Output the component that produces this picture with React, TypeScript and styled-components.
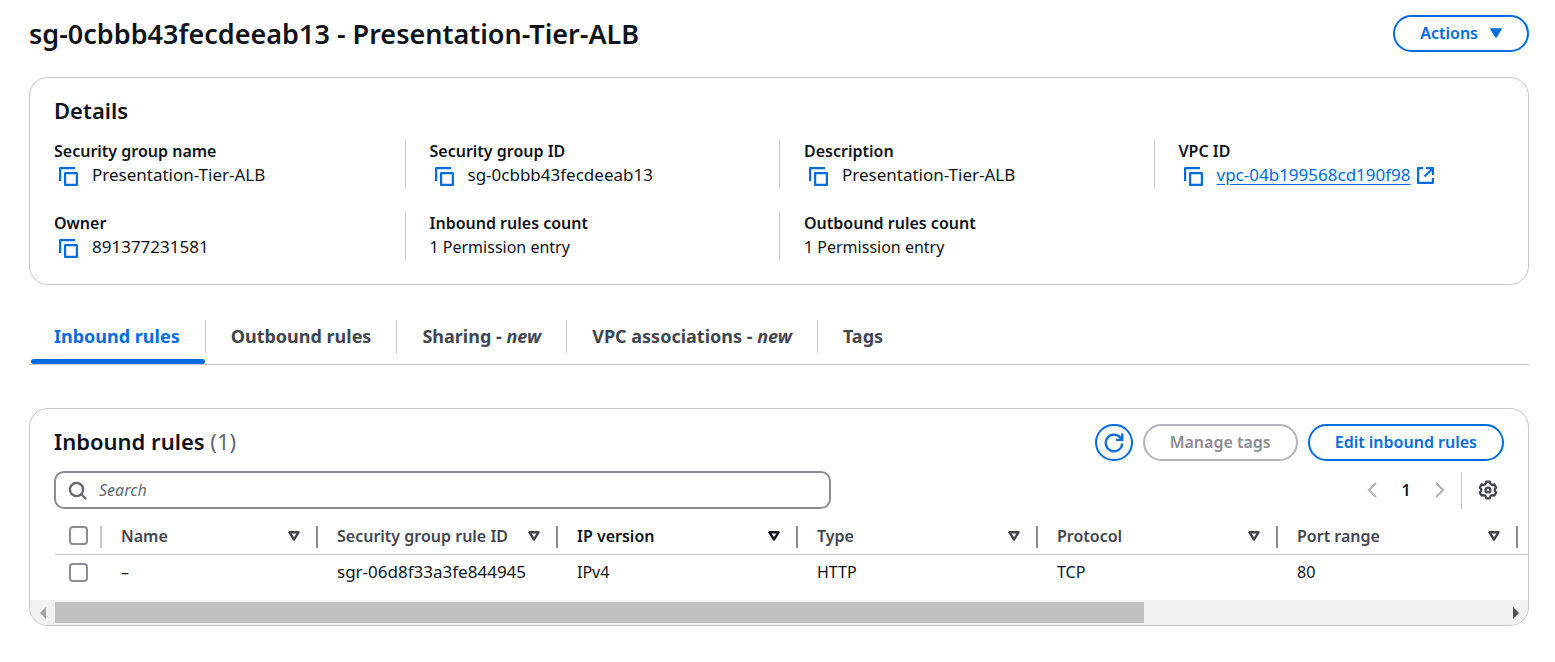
import React from "react";
import styled, { createGlobalStyle, css } from "styled-components";

const color = {
  text: "#0f141a",
  heading: "#424650",
  muted: "#656871",
  link: "#006ce0",
  line: "#c6c6cd",
  control: "#8c8c94",
  disabled: "#b4b4bb",
};

const GlobalStyle = createGlobalStyle`
  * { box-sizing: border-box; }
  body {
    margin: 0;
    background: #fff;
    color: ${color.text};
    font-family: "Noto Sans", "Open Sans", sans-serif;
    font-size: 16px;
    line-height: 24px;
  }
  button, input { font: inherit; }
`;

const Page = styled.main`
  padding: 15px 26px 36px 29px;
`;

const PageHeader = styled.header`
  display: flex;
  align-items: center;
  justify-content: space-between;
  margin-bottom: 25px;
`;

const PageTitle = styled.h1`
  margin: 0;
  font-size: 27px;
  line-height: 37px;
  font-weight: 600;
`;

const Card = styled.section`
  border: 1px solid ${color.line};
  border-radius: 19px;
  overflow: hidden;
`;

const CardTitle = styled.h2`
  margin: 0;
  font-size: 22px;
  line-height: 28px;
  font-weight: 600;
`;

const Counter = styled.span`
  color: ${color.muted};
  font-weight: 400;
`;

const DetailsHeader = styled.div`
  padding: 18px 24px 16px;
`;

const DetailsGrid = styled.dl`
  display: grid;
  grid-template-columns: repeat(4, 1fr);
  row-gap: 24px;
  margin: 0;
  padding-bottom: 24px;
`;

const DetailCell = styled.div`
  padding: 0 24px;
  border-left: 1px solid ${color.line};
  &:nth-child(4n + 1) { border-left: 0; }
`;

const DetailLabel = styled.dt`
  line-height: 22px;
  font-weight: 600;
`;

const DetailValue = styled.dd`
  display: flex;
  align-items: center;
  height: 26px;
  margin: 0;
`;

const CopyButton = styled.button`
  display: flex;
  margin: 3px 14px 0 5px;
  padding: 0;
  border: 0;
  background: none;
  color: ${color.link};
`;

const Identifier = styled.span`
  font-size: 17px;
`;

const ExternalLink = styled.a`
  display: flex;
  align-items: center;
  gap: 6px;
  color: ${color.link};
  text-underline-offset: 3px;
`;

const PillButton = styled.button`
  display: inline-flex;
  align-items: center;
  justify-content: center;
  gap: 12px;
  height: 37px;
  padding: 0 25px 2px;
  border: 2px solid ${color.link};
  border-radius: 19px;
  background: #fff;
  color: ${color.link};
  font-weight: 600;
  &:disabled {
    border-color: ${color.disabled};
    color: ${color.control};
  }
`;

const RoundButton = styled(PillButton)`
  width: 38px;
  padding: 0;
`;

const TabList = styled.div`
  display: flex;
  margin: 24px 0 43px;
  border-bottom: 1px solid ${color.line};
`;

const Tab = styled.button<{ $active?: boolean }>`
  display: flex;
  flex-direction: column;
  padding: 11px 0 0;
  border: 0;
  background: none;
  color: ${(p) => (p.$active ? color.link : color.heading)};
  font-size: 18px;
  font-weight: 700;
  &::after {
    content: "";
    align-self: stretch;
    height: 5px;
    margin: 6px 1px 0 2px;
    border-radius: 3px;
    background: ${(p) => (p.$active ? color.link : "transparent")};
  }
  &:not(:last-child) > span { border-right: 1px solid ${color.line}; }
`;

const TabLabel = styled.span`
  padding: 4px 25px 5px;
  white-space: nowrap;
`;

const TableHeader = styled.div`
  display: flex;
  align-items: center;
  justify-content: space-between;
  padding: 15px 24px 0;
  ${CardTitle} { padding-bottom: 4px; }
`;

const ButtonRow = styled.div`
  display: flex;
  gap: 10px;
`;

const Toolbar = styled.div`
  display: flex;
  align-items: center;
  justify-content: space-between;
  padding: 10px 24px;
`;

const SearchBox = styled.label`
  display: flex;
  align-items: center;
  gap: 12px;
  flex: 0 1 777px;
  height: 38px;
  padding: 0 12px;
  border: 2px solid ${color.control};
  border-radius: 10px;
  color: ${color.muted};
`;

const SearchInput = styled.input`
  flex: 1;
  min-width: 0;
  padding: 0;
  border: 0;
  outline: 0;
  background: none;
  color: ${color.text};
  &::placeholder {
    color: ${color.muted};
    font-style: italic;
    opacity: 1;
  }
`;

const Pagination = styled.nav`
  display: flex;
  align-items: center;
`;

const IconButton = styled.button`
  display: flex;
  padding: 0;
  border: 0;
  background: none;
  color: ${color.heading};
  &:disabled { color: ${color.disabled}; }
`;

const PageNumber = styled.button`
  width: 58px;
  padding: 0;
  border: 0;
  background: none;
  color: ${color.text};
  font-weight: 600;
`;

const Preferences = styled.div`
  display: flex;
  align-items: center;
  height: 37px;
  margin-left: 16px;
  padding: 0 6px 0 16px;
  border-left: 1px solid ${color.line};
`;

const TableScroller = styled.div`
  overflow: hidden;
  margin-left: 25px;
  padding-bottom: 9px;
`;

const RulesTable = styled.table`
  width: 1942px;
  table-layout: fixed;
  border-collapse: separate;
  border-spacing: 0;
`;

const cell = css`
  height: 36px;
  padding: 0 0 0 19px;
  text-align: left;
`;

const HeadCell = styled.th<{ $width?: number }>`
  ${cell}
  width: ${(p) => (p.$width ? `${p.$width}px` : "auto")};
  border-bottom: 1px solid ${color.line};
  color: ${(p) => (p["aria-sort"] ? color.text : color.heading)};
  font-weight: 600;
`;

const HeadContent = styled.div`
  display: flex;
  align-items: center;
  justify-content: space-between;
  height: 22px;
  padding: 0 16px 2px 0;
  border-right: 2px solid ${color.control};
  white-space: nowrap;
`;

const SelectContent = styled(HeadContent)`
  padding-right: 0;
  border-color: ${color.line};
`;

const SelectHead = styled(HeadCell)`
  padding-left: 14px;
`;

const BodyCell = styled.td`
  ${cell}
  padding-bottom: 2px;
`;

const SelectCell = styled(BodyCell)`
  padding-left: 14px;
`;

const Checkbox = styled.input.attrs({ type: "checkbox" })`
  appearance: none;
  display: block;
  width: 19px;
  height: 19px;
  margin: 0;
  border: 2px solid ${color.control};
  border-radius: 4px;
  background: #fff;
`;

const ScrollBar = styled.div`
  display: flex;
  height: 25px;
  padding: 2px 0;
  background: #f1f1f1;
`;

const ScrollArrow = styled.button`
  display: flex;
  align-items: center;
  justify-content: center;
  width: 25px;
  padding: 0;
  border: 0;
  background: none;
`;

const ScrollTrack = styled.div`
  flex: 1;
`;

const ScrollThumb = styled.div`
  width: 75.2%;
  height: 21px;
  background: #c1c1c1;
`;

const CopyIcon = () => (
  <svg width="19" height="19" viewBox="0 0 19 19" fill="none" stroke="currentColor" strokeWidth="2.200" aria-hidden="true">
    <path d="M1.100 14V1.100H16" strokeLinejoin="round" />
    <path d="M6.100 6.100H17.900V17.900H6.100Z" strokeLinejoin="round" />
  </svg>
);

const ExternalIcon = () => (
  <svg width="17" height="17" viewBox="0 0 17 17" fill="none" stroke="currentColor" strokeWidth="2.200" aria-hidden="true">
    <path d="M6 1.100H1.100V15.900H15.900V11M9 1.100H15.900V8M15.500 1.500L7.500 9.500" strokeLinejoin="round" />
  </svg>
);

const CaretFilled = () => (
  <svg width="12" height="10" viewBox="0 0 12 10" fill="currentColor" stroke="currentColor" strokeWidth="1.500" strokeLinejoin="round" aria-hidden="true">
    <path d="M1 1H11L6 9Z" />
  </svg>
);

const CaretOutline = () => (
  <svg width="12" height="10" viewBox="0 0 12 10" fill="none" stroke="currentColor" strokeWidth="2.400" strokeLinejoin="round" aria-hidden="true">
    <path d="M1.500 1.300H10.500L6 8.500Z" />
  </svg>
);

const RefreshIcon = () => (
  <svg width="20" height="20" viewBox="0 0 20 20" fill="none" stroke="currentColor" strokeWidth="2.300" aria-hidden="true">
    <path d="M18.300 10.500A8.300 8.300 0 1 1 16.500 4.800L18.300 6.800" />
    <path d="M18.300 0.500V6.900H12" />
  </svg>
);

const SearchIcon = () => (
  <svg width="19" height="19" viewBox="0 0 19 19" fill="none" stroke="currentColor" strokeWidth="2.300" strokeLinecap="round" aria-hidden="true">
    <circle cx="8.500" cy="8.500" r="6.600" />
    <path d="M13.300 13.300L17.500 17.500" />
  </svg>
);

const Chevron = ({ flip }: { flip?: boolean }) => (
  <svg width="10" height="16" viewBox="0 0 10 16" fill="none" stroke="currentColor" strokeWidth="2.300" aria-hidden="true">
    <path d={flip ? "M1 1L8 8L1 15" : "M9 1L2 8L9 15"} />
  </svg>
);

const GearIcon = () => (
  <svg width="20" height="20" viewBox="0 0 20 20" fill="none" stroke="currentColor" strokeWidth="2.300" strokeLinejoin="round" aria-hidden="true">
    <path d="M8.300 1.700H11.700L12.500 3.900L14.200 4.900L16.500 4.500L18.200 7.500L16.800 9.200V10.800L18.200 12.500L16.500 15.500L14.200 15.100L12.500 16.100L11.700 18.300H8.300L7.500 16.100L5.800 15.100L3.500 15.500L1.800 12.500L3.200 10.800V9.200L1.800 7.500L3.500 4.500L5.800 4.900L7.500 3.900Z" />
    <circle cx="10" cy="10" r="2.400" />
  </svg>
);

const ScrollTriangle = ({ right }: { right?: boolean }) => (
  <svg width="6" height="12" viewBox="0 0 6 12" fill={right ? "#505050" : "#a3a3a3"} aria-hidden="true">
    <path d={right ? "M0 0L6 6L0 12Z" : "M6 0L0 6L6 12Z"} />
  </svg>
);

type Detail = { label: string; value: string; copy?: boolean; link?: boolean };

const details: Detail[] = [
  { label: "Security group name", value: "Presentation-Tier-ALB", copy: true },
  { label: "Security group ID", value: "sg-0cbbb43fecdeeab13", copy: true },
  { label: "Description", value: "Presentation-Tier-ALB", copy: true },
  { label: "VPC ID", value: "vpc-04b199568cd190f98", copy: true, link: true },
  { label: "Owner", value: "891377231581", copy: true },
  { label: "Inbound rules count", value: "1 Permission entry" },
  { label: "Outbound rules count", value: "1 Permission entry" },
];

const tabs = [
  { label: "Inbound rules" },
  { label: "Outbound rules" },
  { label: "Sharing", isNew: true },
  { label: "VPC associations", isNew: true },
  { label: "Tags" },
];

const columns = [
  { title: "Name", width: 216, value: "–" },
  { title: "Security group rule ID", width: 240, value: "sgr-06d8f33a3fe844945", identifier: true },
  { title: "IP version", width: 240, value: "IPv4", sorted: true },
  { title: "Type", width: 240, value: "HTTP" },
  { title: "Protocol", width: 240, value: "TCP" },
  { title: "Port range", width: 240, value: "80" },
];

const DetailContent = ({ detail }: { detail: Detail }) => {
  if (detail.link) {
    return (
      <ExternalLink href="#vpc">
        <Identifier>{detail.value}</Identifier>
        <ExternalIcon />
      </ExternalLink>
    );
  }
  return detail.copy ? <Identifier>{detail.value}</Identifier> : <>{detail.value}</>;
};

export default function App() {
  return (
    <>
      <GlobalStyle />
      <Page>
        <PageHeader>
          <PageTitle>sg-0cbbb43fecdeeab13 - Presentation-Tier-ALB</PageTitle>
          <PillButton>
            Actions <CaretFilled />
          </PillButton>
        </PageHeader>

        <Card>
          <DetailsHeader>
            <CardTitle>Details</CardTitle>
          </DetailsHeader>
          <DetailsGrid>
            {details.map((d) => (
              <DetailCell key={d.label}>
                <DetailLabel>{d.label}</DetailLabel>
                <DetailValue>
                  {d.copy && (
                    <CopyButton aria-label={`Copy ${d.label}`}>
                      <CopyIcon />
                    </CopyButton>
                  )}
                  <DetailContent detail={d} />
                </DetailValue>
              </DetailCell>
            ))}
          </DetailsGrid>
        </Card>

        <TabList role="tablist">
          {tabs.map((t, i) => (
            <Tab key={t.label} role="tab" aria-selected={i === 0} $active={i === 0}>
              <TabLabel>
                {t.label}
                {t.isNew && (
                  <>
                    {" - "}
                    <em>new</em>
                  </>
                )}
              </TabLabel>
            </Tab>
          ))}
        </TabList>

        <Card>
          <TableHeader>
            <CardTitle>
              Inbound rules <Counter>(1)</Counter>
            </CardTitle>
            <ButtonRow>
              <RoundButton aria-label="Refresh">
                <RefreshIcon />
              </RoundButton>
              <PillButton disabled>Manage tags</PillButton>
              <PillButton>Edit inbound rules</PillButton>
            </ButtonRow>
          </TableHeader>
          <Toolbar>
            <SearchBox>
              <SearchIcon />
              <SearchInput type="text" placeholder="Search" aria-label="Search" />
            </SearchBox>
            <Pagination aria-label="Pagination">
              <IconButton disabled aria-label="Previous page">
                <Chevron />
              </IconButton>
              <PageNumber>1</PageNumber>
              <IconButton disabled aria-label="Next page">
                <Chevron flip />
              </IconButton>
              <Preferences>
                <IconButton aria-label="Preferences">
                  <GearIcon />
                </IconButton>
              </Preferences>
            </Pagination>
          </Toolbar>
          <TableScroller>
            <RulesTable>
              <thead>
                <tr>
                  <SelectHead $width={47}>
                    <SelectContent>
                      <Checkbox aria-label="Select all rules" />
                    </SelectContent>
                  </SelectHead>
                  {columns.map((c) => (
                    <HeadCell key={c.title} $width={c.width} aria-sort={c.sorted ? "none" : undefined}>
                      <HeadContent>
                        {c.title}
                        <CaretOutline />
                      </HeadContent>
                    </HeadCell>
                  ))}
                  <HeadCell />
                </tr>
              </thead>
              <tbody>
                <tr>
                  <SelectCell>
                    <Checkbox aria-label="Select rule sgr-06d8f33a3fe844945" />
                  </SelectCell>
                  {columns.map((c) => (
                    <BodyCell key={c.title}>
                      {c.identifier ? <Identifier>{c.value}</Identifier> : c.value}
                    </BodyCell>
                  ))}
                  <BodyCell />
                </tr>
              </tbody>
            </RulesTable>
          </TableScroller>
          <ScrollBar>
            <ScrollArrow aria-label="Scroll left">
              <ScrollTriangle />
            </ScrollArrow>
            <ScrollTrack>
              <ScrollThumb />
            </ScrollTrack>
            <ScrollArrow aria-label="Scroll right">
              <ScrollTriangle right />
            </ScrollArrow>
          </ScrollBar>
        </Card>
      </Page>
    </>
  );
}
